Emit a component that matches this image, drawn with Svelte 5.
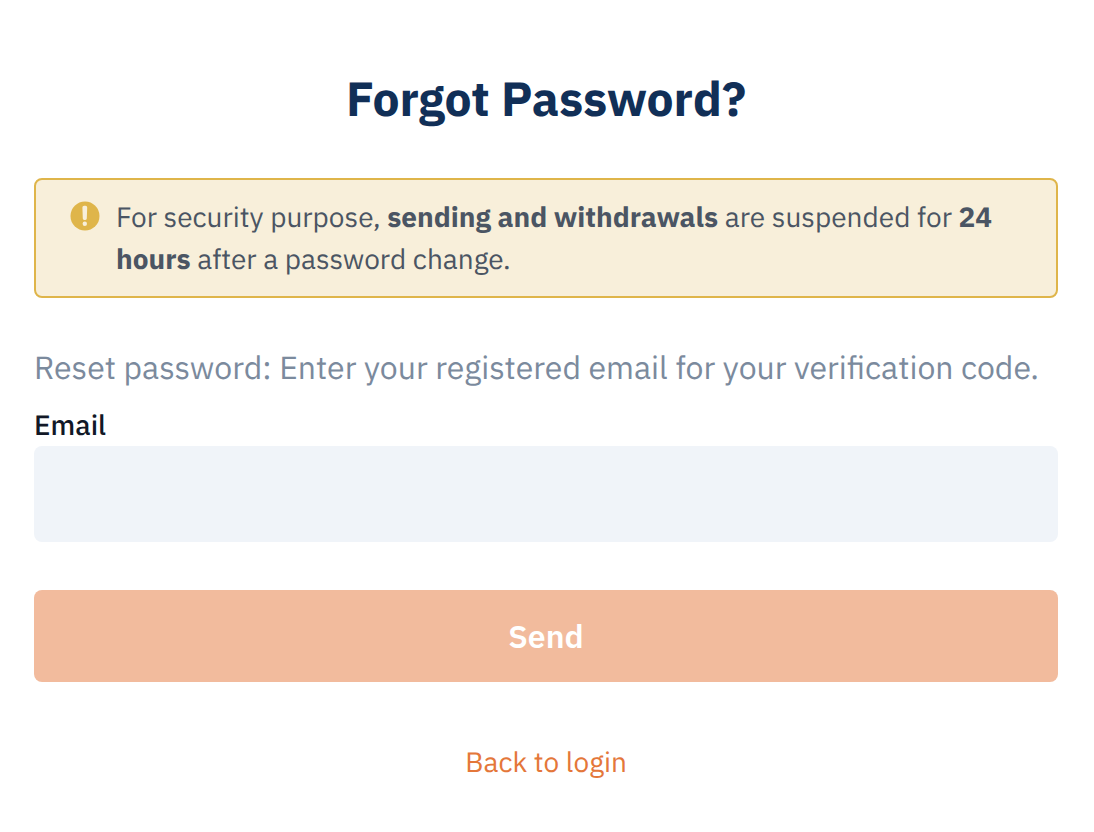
<script lang="ts">
	let email = $state('');

	function handleSubmit(event: SubmitEvent) {
		event.preventDefault();
	}
</script>

<main>
	<h1>Forgot Password?</h1>

	<div class="notice" role="note">
		<svg class="icon" viewBox="0 0 30 30" aria-hidden="true">
			<circle cx="15" cy="15" r="14.5" fill="#dfb54a" />
			<path d="M14.2 4.8h1.2q1.9 0 1.8 1.7l-.4 11q-.1 1.4-1.4 1.4h-1.2q-1.3 0-1.4-1.4l-.4-11q-.1-1.7 1.8-1.7z" fill="#f8efda" />
			<circle cx="14.8" cy="22.8" r="2.2" fill="#f8efda" />
		</svg>
		<p>
			For security purpose, <strong>sending and withdrawals</strong> are suspended for
			<strong>24 hours</strong> after a password change.
		</p>
	</div>

	<form onsubmit={handleSubmit}>
		<p class="hint">Reset password: Enter your registered email for your verification code.</p>
		<label for="email">Email</label>
		<input id="email" type="email" bind:value={email} />
		<button type="submit" disabled={!email}>Send</button>
	</form>

	<a href="/login">Back to login</a>
</main>

<style>
	:global(body) {
		background: #fff;
	}

	main {
		display: flex;
		flex-direction: column;
		padding: 67px 36px 40px 34px;
		font-family: 'IBM Plex Sans', Roboto, sans-serif;
		font-size: 28px;
		line-height: 42px;
		text-rendering: geometricPrecision;
	}

	h1 {
		margin: 0 0 47px;
		color: #112f57;
		font-size: 48px;
		font-weight: 700;
		line-height: 64px;
		text-align: center;
	}

	p {
		margin: 0;
	}

	.notice {
		display: flex;
		gap: 16px;
		padding: 16px 34px;
		border: 2px solid #dfb54a;
		border-radius: 8px;
		background: #f8efda;
		color: #4b5563;
	}

	.icon {
		flex: none;
		width: 30px;
		height: 30px;
		margin-top: 5px;
	}

	form {
		display: flex;
		flex-direction: column;
		margin-top: 45px;
	}

	.hint {
		color: #7b8a9d;
		font-size: 32px;
		line-height: 48px;
	}

	label {
		margin-top: 13px;
		color: #111827;
		font-weight: 500;
	}

	input {
		box-sizing: border-box;
		width: 100%;
		height: 96px;
		padding: 0 24px;
		border: 0;
		border-radius: 8px;
		background: #f0f4f9;
		font: inherit;
	}

	button {
		height: 92px;
		margin-top: 48px;
		border: 0;
		border-radius: 8px;
		background: #e4773a;
		color: #fff;
		font-family: inherit;
		font-size: 32px;
		font-weight: 600;
	}

	button:disabled {
		background: #f2bb9d;
	}

	a {
		align-self: center;
		margin-top: 59px;
		color: #e4773a;
		text-decoration: none;
	}
</style>
